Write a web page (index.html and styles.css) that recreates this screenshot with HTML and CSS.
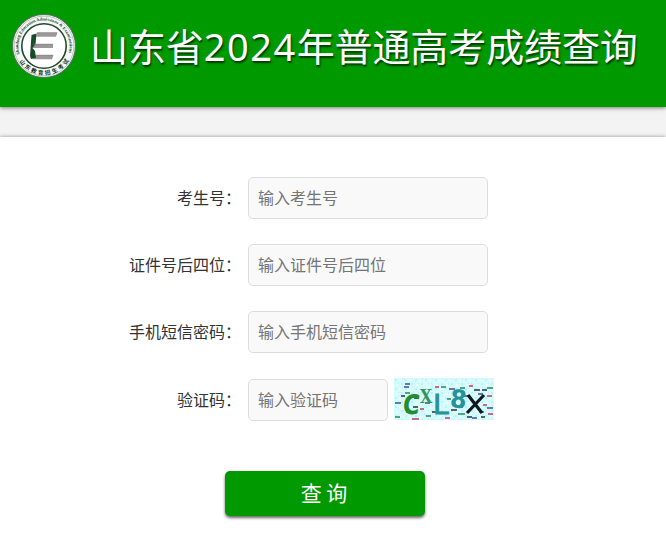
FILE: index.html
```html
<!DOCTYPE html>
<html lang="zh-CN">
<head>
<meta charset="utf-8">
<title>山东省2024年普通高考成绩查询</title>
<link rel="stylesheet" href="styles.css">
</head>
<body>
<header class="header">
  <svg class="logo" viewBox="0 0 66 66" aria-hidden="true">
    <defs>
      <path id="ring-top" d="M8.7 41.2A25.6 25.6 0 1 1 57.3 41.2"/>
      <path id="ring-bottom" d="M6.9 45.2A28.8 28.8 0 0 0 59.1 45.2"/>
    </defs>
    <circle cx="33" cy="33" r="31.5" fill="#f5f7f5" stroke="#52745b" stroke-width="1.1"/>
    <circle cx="33" cy="33" r="29.9" fill="none" stroke="#93a595" stroke-width=".6"/>
    <circle cx="33" cy="33" r="22.2" fill="#fff" stroke="#214a30" stroke-width="1.6"/>
    <text class="ring-en"><textPath href="#ring-top" textLength="95" lengthAdjust="spacingAndGlyphs">Shandong Education Admissions &amp; Examinations</textPath></text>
    <text class="ring-cn"><textPath href="#ring-bottom" startOffset="3.5">山东教育招生考试</textPath></text>
    <path d="M26 19.5H46.5L45 23.7H25ZM22 31H42V35H21.5ZM24 42H42.5L41 46.3H22Z" fill="#999"/>
    <path d="M20.5 22L25.5 20.5L24.5 31L21.5 35L24 38L25 45L20 46L19 43Z" fill="#174c29"/>
    <path d="M26 19.8H46M22 31.2H42M24 42.2H42" fill="none" stroke="#7b807b" stroke-width=".6"/>
  </svg>
  <h1 class="title">山东省<span class="year">2024</span>年普通高考成绩查询</h1>
</header>
<main class="panel">
  <form class="form">
    <div class="row"><label class="label" for="num">考生号<span class="colon">：</span></label><input class="input" id="num" placeholder="输入考生号"></div>
    <div class="row"><label class="label" for="card">证件号后四位<span class="colon">：</span></label><input class="input" id="card" placeholder="输入证件号后四位"></div>
    <div class="row"><label class="label" for="sms">手机短信密码<span class="colon">：</span></label><input class="input" id="sms" placeholder="输入手机短信密码"></div>
    <div class="row row-code"><label class="label" for="code">验证码<span class="colon">：</span></label><input class="input input-short" id="code" placeholder="输入验证码">
      <svg class="captcha" viewBox="0 0 100 42" aria-hidden="true">
        <defs>
          <pattern id="grain" width="10" height="9" patternUnits="userSpaceOnUse">
            <path d="M1 1h2v2h-2zM7 5h2v2h-2z" fill="#b5f5fb"/>
            <path d="M5 2h2v1h-2zM2 6h2v2h-2z" fill="#effff2"/>
            <path d="M8 0h1v1h-1zM4 5h1v1h-1z" fill="#d6e4ff"/>
          </pattern>
        </defs>
        <path fill="#d5fcfc" d="M0 0h100v42H0z"/>
        <path fill="url(#grain)" d="M0 0h100v42H0z"/>
        <g fill="none" stroke-width="1.3">
          <path stroke="#3f4b99" d="M11 6h5M10 9h5M55 11h6M69 18h7M84 16h5M1 25h6M31 25h5M12 34h5M93 30h6M78 40h5"/>
          <path stroke="#263342" d="M80 12h6M88 12h5M20 20h5M7 18h4M57 32h6M19 29h5M73 39h5M87 39h4M38 34h5"/>
          <path stroke="#c33b62" d="M41 9h4M75 8h4M93 18h5M18 41h7M51 40h5M89 27h4M26 31h4M65 29h4M94 36h5"/>
          <path stroke="#24865e" d="M47 9h5M66 10h5M93 10h6M11 15h5M1 39h5M32 38h5M64 36h7M53 21h4M85 34h5"/>
        </g>
        <text class="cap cap-c" transform="translate(8 36) skewX(-6) scale(.85 1)">C</text>
        <text class="cap cap-small-x" transform="translate(26 25) scale(.87 1)">X</text>
        <text class="cap cap-l" transform="translate(39 36) scale(1.05 1)">L</text>
        <text class="cap cap-8" transform="translate(55.5 29) rotate(5) scale(.95 1)">8</text>
        <path d="M74 17L88 35M90 17L73 35" stroke="#101820" stroke-width="3.2" fill="none"/>
      </svg>
    </div>
    <button class="submit" type="button">查 询</button>
  </form>
</main>
</body>
</html>
```
FILE: styles.css
```css
* {
  box-sizing: border-box;
}

body {
  margin: 0;
  height: 545px;
  overflow: hidden;
  display: flex;
  flex-direction: column;
  gap: 30px;
  background: #f3f3f3;
  color: #333;
  font: 16px/24px "Noto Sans CJK SC", sans-serif;
}

.header {
  height: 107px;
  flex: none;
  display: flex;
  align-items: flex-start;
  padding: 13px 0 0 11px;
  background: #090;
  box-shadow: 0 1px 4px rgba(0, 0, 0, .5);
}

.logo {
  width: 66px;
  height: 66px;
  flex: none;
}

.ring-en {
  font: bold 4.4px "Liberation Serif", serif;
  fill: #244b30;
}

.ring-cn {
  font: bold 5.6px "Noto Sans CJK SC", sans-serif;
  fill: #102f19;
  letter-spacing: 2px;
}

.title {
  margin: 6px 0 0 13px;
  color: #fff;
  font-size: 38px;
  font-weight: 400;
  line-height: 52px;
  letter-spacing: -.1px;
  white-space: nowrap;
  text-shadow: 1px 2px 2px rgba(0, 0, 0, .65);
}

.year {
  font-family: "Noto Sans", sans-serif;
  letter-spacing: 1.5px;
}

.panel {
  flex: 1;
  padding-top: 40px;
  background: #fff;
  box-shadow: 0 0 4px rgba(0, 0, 0, .4);
}

.form {
  display: flex;
  flex-direction: column;
  gap: 25px;
}

.row {
  display: flex;
  align-items: center;
  height: 42px;
}

.row-code {
  margin-top: 1px;
}

.label {
  width: 241px;
  margin-right: 7px;
  padding-bottom: 3px;
  text-align: right;
}

.colon {
  display: inline-block;
  width: 16px;
  text-indent: -1px;
}

.input {
  width: 240px;
  height: 42px;
  padding: 0 9px 3px;
  border: 1px solid #ddd;
  border-radius: 5px;
  background: #f9f9f9;
  font: inherit;
}

.input::placeholder {
  color: #757575;
}

.input-short {
  width: 140px;
}

.captcha {
  width: 100px;
  height: 42px;
  margin: -2px 0 0 6px;
}

.cap {
  font-family: "DejaVu Sans", sans-serif;
  font-weight: bold;
}

.cap-c {
  font-size: 27px;
  fill: #238c2e;
}

.cap-small-x {
  font: bold 18px "DejaVu Serif", serif;
  fill: #36935e;
}

.cap-l {
  font-size: 27px;
  font-weight: 400;
  fill: #289199;
  stroke: #289199;
  stroke-width: .8px;
}

.cap-8 {
  font-size: 25px;
  fill: #24939b;
}

.submit {
  width: 200px;
  height: 45px;
  margin: 25px 0 0 225px;
  padding: 0 2px 2px 0;
  border: 0;
  border-radius: 5px;
  background: #090;
  box-shadow: 0 2px 3px rgba(0, 0, 0, .6);
  color: #fff;
  font: 21px/43px "Noto Sans CJK SC", sans-serif;
}
```
